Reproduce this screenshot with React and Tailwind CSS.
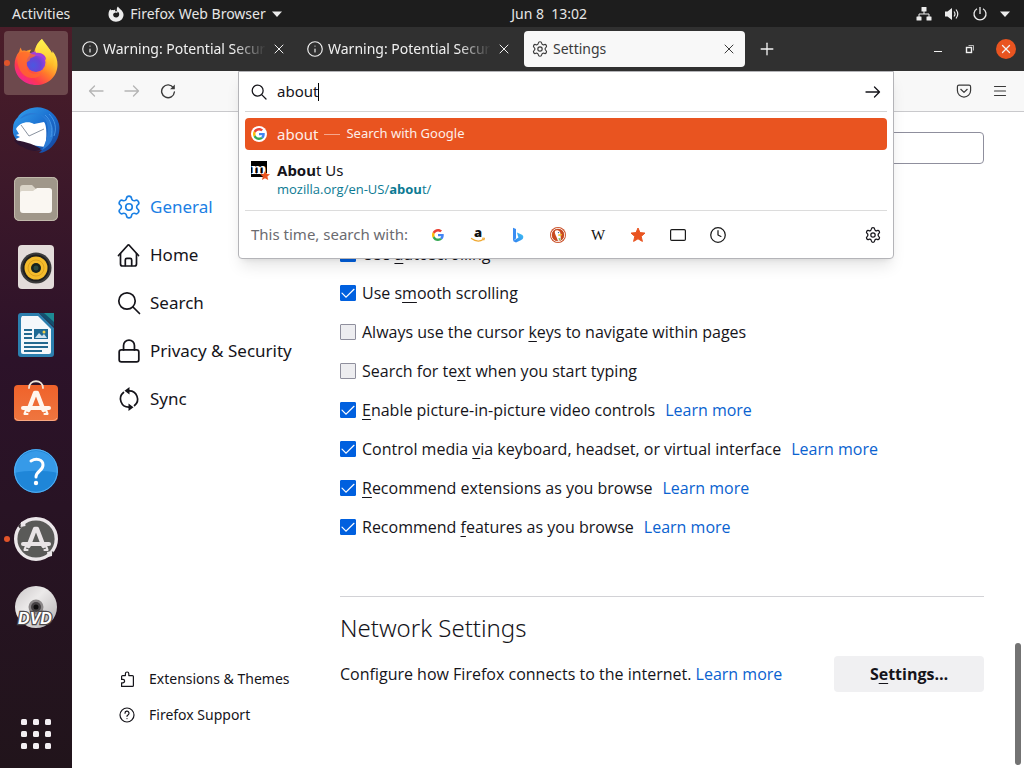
import React from "react";
import { Clock, Info, Lock, Plus, Settings, X } from "lucide-react";

/* ---------- Dock icons ---------- */

function FirefoxLogo() {
  return (
    <svg viewBox="0 0 48 48" className="size-12" aria-hidden="true">
      <defs>
        <linearGradient id="fx-body" x1="0.85" y1="0.1" x2="0.2" y2="0.95">
          <stop offset="0" stopColor="#fff14a" />
          <stop offset="0.3" stopColor="#ffc02f" />
          <stop offset="0.55" stopColor="#ff7a2b" />
          <stop offset="0.8" stopColor="#ff3750" />
          <stop offset="1" stopColor="#f0239a" />
        </linearGradient>
        <linearGradient id="fx-flame" x1="0.5" y1="0" x2="0.5" y2="1">
          <stop offset="0" stopColor="#fff44f" />
          <stop offset="0.5" stopColor="#ffd43a" />
          <stop offset="1" stopColor="#ff980e" stopOpacity="0" />
        </linearGradient>
        <radialGradient id="fx-globe" cx="0.35" cy="0.65" r="0.8">
          <stop offset="0" stopColor="#4a58e0" />
          <stop offset="0.5" stopColor="#6a43d6" />
          <stop offset="1" stopColor="#b23fe0" />
        </radialGradient>
      </defs>
      <path
        d="M30 0c.5 3.500 3 5.500 6 8.500 2 2 3.500 4 4 6 .4-.8.500-1.800.4-2.600 3.600 4.300 5.300 9.300 5.100 14.100C45.200 38 36 46 24.500 46 12.500 46 2.600 37.500 2.600 26c0-5 1.400-9.500 4.700-13.500.2-1.700.7-3 1.500-4.100.3 1.500.8 2.500 1.600 3.300 1.200-.3 2.600-.2 3.700.2C15.500 11.500 17.500 10.700 19.500 10.800c-1 .8-1.600 2-1.900 3.300h4.600C22.500 9.500 25.500 4 30 0z"
        fill="url(#fx-body)"
      />
      <circle cx="24" cy="23.500" r="9.500" fill="url(#fx-globe)" />
      <path d="M17 16c2-3.500 8-5 13-2 2.500 1.500 4 4 4 7-3-3.500-7-4.500-11-4z" fill="#a33fd8" />
      <path
        d="M24 14c5-1 10 2 11 7 1 6-2 11-7 13 8 .5 14-5 14-13C41 13 35 7 30 0c-5 4-7.500 9-6 14z"
        fill="url(#fx-flame)"
      />
      <path
        d="M5.500 16c4-4 9-4 12-2.500 1 1.500 3 2 6 2.200.2 1.300-1.500 2.300-4.500 3.300-1 .5-1.400 1.500-1.200 2.500-2 .8-3.500 2-3.400 4.500 0 5 4 9 9.600 9 3 0 4.500-.5 6-1.500-2 4-6 6-11 5.500C10 38 4 28 5.500 16z"
        fill="#ff6a2c"
        opacity="0.75"
      />
    </svg>
  );
}

function ThunderbirdLogo() {
  return (
    <svg viewBox="0 0 48 48" className="size-12" aria-hidden="true">
      <defs>
        <linearGradient id="tb-blue" x1="0" y1="0" x2="1" y2="1">
          <stop offset="0" stopColor="#35a3ee" />
          <stop offset="0.5" stopColor="#1b6fd0" />
          <stop offset="1" stopColor="#143f96" />
        </linearGradient>
      </defs>
      <path
        d="M20 1c11-3 24 4 27 16 2 10-3 22-13 27-2 1-5 2-7 2l3-3c-9 1-17-1-21-6C4 33 0 28 1 21c0-5 2-8 5-11 1-3 8-8 14-9z"
        fill="url(#tb-blue)"
      />
      <path
        d="M4 22c3-6 12-9 18-5l10-2c3 3 3 17 1 25l-14-2C12 37 5 35 4 32l4-2-4-2 3-1z"
        fill="#fff"
      />
      <path d="M9 18l8 11 15-7" fill="none" stroke="#8a93a0" strokeWidth="1" />
      <path
        d="M8 12C13 5 24 4 31 10c7 6 6 20-1 33 9-5 13-13 11-22C38 9 24 2 8 12z"
        fill="#2a7bd6"
      />
      <path d="M33 8c6 5 8 13 6 22M37 7c6 6 8 14 5 22" fill="none" stroke="#4595e6" strokeWidth="1" />
      <path d="M2 33c8 1 18 3 27 9-5 4-14 1-18-2-4-1-7-4-9-7z" fill="#2d1530" />
    </svg>
  );
}

function FilesLogo() {
  return (
    <svg viewBox="0 0 44 44" className="size-11" aria-hidden="true">
      <rect width="44" height="44" rx="5" fill="#a0978a" />
      <rect x="0.500" y="0.500" width="43" height="43" rx="5" fill="none" stroke="#c2baac" />
      <path d="M6 11a3 3 0 0 1 3-3h9l4 4h13a3 3 0 0 1 3 3v5H6z" fill="#d9d3c7" />
      <path d="M6 16a2 2 0 0 1 2-2h11l4-3h12a3 3 0 0 1 3 3v19a3 3 0 0 1-3 3H9a3 3 0 0 1-3-3z" fill="#faf7f2" />
    </svg>
  );
}

function MusicLogo() {
  return (
    <svg viewBox="0 0 36 44" className="h-11 w-9" aria-hidden="true">
      <rect width="36" height="44" rx="4" fill="#e3dcda" />
      <circle cx="18" cy="23" r="15.500" fill="#3b3b3b" />
      <circle cx="18" cy="23" r="13.500" fill="#1f1f1f" />
      <circle cx="18" cy="23" r="11.500" fill="#f3bb2c" />
      <circle cx="18" cy="23" r="8" fill="none" stroke="#dda21c" strokeWidth="1" />
      <circle cx="18" cy="23" r="5" fill="#16231f" />
      <circle cx="18" cy="23" r="2.500" fill="#2b4a3f" />
    </svg>
  );
}

function WriterLogo() {
  return (
    <svg viewBox="0 0 38 46" className="h-[46px] w-[38px]" aria-hidden="true">
      <path d="M4 1h18l15 15v26a3 3 0 0 1-3 3H4a3 3 0 0 1-3-3V4a3 3 0 0 1 3-3z" fill="#2b7fae" />
      <path d="M5 4h16l13 13v23a2 2 0 0 1-2 2H6a2 2 0 0 1-2-2V6z" fill="#f4f8fb" />
      <path d="M22 1h15v14z" fill="#14506f" />
      <path d="M27 1h10v9z" fill="#1d8a94" />
      <path
        d="M7 18h8M7 22h8M7 26h8M7 31h24M7 35h24M7 39h18"
        stroke="#23698f"
        strokeWidth="2"
      />
      <rect x="17" y="17" width="14" height="10" fill="#1e6a94" />
      <path d="M18 26l4-5 3 3 2-2 3 4z" fill="#cfe3ee" />
      <circle cx="27" cy="20" r="1.500" fill="#f2d34c" />
    </svg>
  );
}

function LetterA({ color }) {
  return (
    <g fill="none" stroke={color} strokeLinecap="round" strokeLinejoin="round">
      <path d="M15.500 30l6.500-17h2l6.500 17" strokeWidth="4.400" />
      <path d="M10 28h26" strokeWidth="4" />
      <path d="M13 30l-1.500 4h3M33 30l1.500 4h-3" strokeWidth="2.200" />
    </g>
  );
}

function SoftwareLogo() {
  return (
    <svg viewBox="0 0 46 46" className="size-[46px]" aria-hidden="true">
      <defs>
        <linearGradient id="sw-bag" x1="0" y1="0" x2="0" y2="1">
          <stop offset="0" stopColor="#f0622a" />
          <stop offset="1" stopColor="#ee7640" />
        </linearGradient>
      </defs>
      <rect x="1" y="5" width="44" height="36" rx="4" fill="url(#sw-bag)" />
      <path d="M2 38q1 2.500 4 2.500h34q3 0 4-2.500" fill="none" stroke="#f7a883" />
      <path d="M16 8c0-9 14-9 14 0" fill="none" stroke="#efe6da" strokeWidth="1.800" strokeLinecap="round" />
      <LetterA color="#fff6ee" />
    </svg>
  );
}

function HelpLogo() {
  return (
    <svg viewBox="0 0 44 44" className="size-11" aria-hidden="true">
      <circle cx="22" cy="22" r="22" fill="#1f86d8" />
      <path d="M0 24a22 22 0 0 1 44 0C32 21 12 21 0 24z" fill="#369ae8" />
      <circle cx="22" cy="22" r="21.300" fill="none" stroke="#56b0f2" />
      <path
        d="M17 12c5-3 12-2 12 4 0 6-7 6-7 12"
        fill="none"
        stroke="#fff"
        strokeWidth="3"
        strokeLinecap="round"
      />
      <circle cx="22" cy="34" r="2.200" fill="#fff" />
    </svg>
  );
}

function UpdaterLogo() {
  return (
    <svg viewBox="0 0 46 46" className="size-[46px]" aria-hidden="true">
      <circle cx="23" cy="23" r="21" fill="#5a5a58" />
      <circle cx="23" cy="23" r="20.300" fill="none" stroke="#ece7ea" strokeWidth="3.400" />
      <path d="M5 10l2.500-2.500 1.500 3-2 2zM38 35l3 1-2 3.500-2.500-1.500z" fill="#3c3538" />
      <path d="M8 6l4-1 .500 5-5 1zM39 40l-4 1-1-5 5-1z" fill="#ece7ea" />
      <LetterA color="#e9e4e6" />
    </svg>
  );
}

function DvdLogo() {
  return (
    <svg viewBox="0 0 44 44" className="size-11" aria-hidden="true">
      <defs>
        <linearGradient id="dvd-disc" x1="0" y1="0" x2="1" y2="1">
          <stop offset="0" stopColor="#c9c5c6" />
          <stop offset="0.4" stopColor="#eceaea" />
          <stop offset="1" stopColor="#b3afb0" />
        </linearGradient>
      </defs>
      <circle cx="22" cy="22" r="21" fill="url(#dvd-disc)" />
      <circle cx="22" cy="22" r="7.500" fill="#8b8788" />
      <circle cx="22" cy="22" r="5" fill="#454143" />
      <circle cx="22" cy="22" r="2.500" fill="#0f0d0e" />
      <text
        x="21"
        y="39"
        textAnchor="middle"
        fontFamily="Liberation Sans, sans-serif"
        fontWeight="700"
        fontStyle="italic"
        fontSize="16"
        fill="#fff"
        stroke="#4c484a"
        strokeWidth="2.500"
        paintOrder="stroke"
      >
        DVD
      </text>
    </svg>
  );
}

function AppsGrid() {
  return (
    <svg viewBox="0 0 30 30" className="size-[30px]" fill="#f3eef2" aria-hidden="true">
      {[0, 12, 24].map((y) =>
        [0, 12, 24].map((x) => <rect key={`${x}-${y}`} x={x} y={y} width="6" height="6" rx="1.500" />)
      )}
    </svg>
  );
}

const dockApps = [
  { name: "Firefox Web Browser", Logo: FirefoxLogo, active: true, running: true },
  { name: "Thunderbird Mail", Logo: ThunderbirdLogo },
  { name: "Files", Logo: FilesLogo },
  { name: "Rhythmbox", Logo: MusicLogo },
  { name: "LibreOffice Writer", Logo: WriterLogo },
  { name: "Ubuntu Software", Logo: SoftwareLogo },
  { name: "Help", Logo: HelpLogo },
  { name: "Software Updater", Logo: UpdaterLogo, running: true },
  { name: "DVD", Logo: DvdLogo },
];

function Dock() {
  return (
    <nav
      aria-label="Dock"
      className="flex w-[72px] shrink-0 flex-col items-center gap-1 bg-linear-to-b from-[#4b1d29] via-[#2c1229] via-45% to-[#21141b] pt-1 pb-0.5"
    >
      {dockApps.map(({ name, Logo, active, running }) => (
        <button
          key={name}
          type="button"
          aria-label={name}
          className={
            active
              ? "relative grid size-16 place-items-center rounded bg-[#6d494d]"
              : "relative grid size-16 place-items-center rounded"
          }
        >
          {running && <span className="absolute top-[29px] left-0 size-[6px] rounded-full bg-[#e2542a]" />}
          <Logo />
        </button>
      ))}
      <button type="button" aria-label="Show Applications" className="mt-auto grid size-16 place-items-center">
        <AppsGrid />
      </button>
    </nav>
  );
}

/* ---------- Shared line icons ---------- */

function SearchIcon({ className, strokeWidth }) {
  return (
    <svg viewBox="0 0 24 24" className={className} fill="none" stroke="currentColor" strokeWidth={strokeWidth} strokeLinecap="round" aria-hidden="true">
      <circle cx="10" cy="10" r="8.200" />
      <path d="M16 16l6.500 6.500" />
    </svg>
  );
}

function Arrow({ back }) {
  return (
    <svg viewBox="0 0 16 16" className="size-4" fill="none" stroke="currentColor" strokeWidth="1.300" strokeLinecap="round" strokeLinejoin="round" aria-hidden="true">
      {back ? <path d="M15 8H1.500M6.500 3l-5 5 5 5" /> : <path d="M1 8h13.500M9.500 3l5 5-5 5" />}
    </svg>
  );
}

/* ---------- System bar ---------- */

function SystemBar() {
  return (
    <header className="grid h-[27px] grid-cols-[1fr_auto_calc(50%-75px)] items-center bg-[#1d1d1d] text-sm text-[#e6e6e6]">
      <div className="flex items-center gap-[38px] pl-3">
        <button type="button">Activities</button>
        <button type="button" className="flex items-center gap-1.5">
          <svg viewBox="0 0 16 16" className="size-4" aria-hidden="true">
            <path
              d="M10 .5c.6 1.500 2 2 3.500 3.800C15.200 6.200 15.700 8 15.500 9.500 15 13.300 12 15.700 8 15.700S.6 12.700.5 8.500C.5 6 1.300 4 2.500 3l.5 1.500c.6-.5 1.700-.6 2.500-.3L7.300 3.500 7 5.200h2C8.500 3 8.800 1.500 10 .5zM7.500 6.500C5.500 7 5 8 5.200 9.200c.3 1.600 1.700 2.300 3 2.200 1.800-.1 3.100-1.500 3-3.200 0-1.200-.8-2.300-1.700-2.700L9.300 7z"
              fill="#ececec"
              fillRule="evenodd"
            />
          </svg>
          Firefox Web Browser
          <svg viewBox="0 0 10 6" className="h-1.5 w-2.5" aria-hidden="true">
            <path d="M0 0.500h10L5 6z" fill="#ececec" />
          </svg>
        </button>
      </div>
      <time className="whitespace-pre">Jun 8  13:02</time>
      <div className="flex items-center justify-end gap-3 pr-3.5 pl-2 text-[#ececec]">
        <svg viewBox="0 0 16 16" className="size-4" fill="currentColor" aria-hidden="true">
          <rect x="5.500" y="1" width="5" height="4.500" rx="0.500" />
          <rect x="0.500" y="10.500" width="5" height="4" rx="0.500" />
          <rect x="10.500" y="10.500" width="5" height="4" rx="0.500" />
          <path d="M8 5v3M3 11V8h10v3" fill="none" stroke="currentColor" />
        </svg>
        <svg viewBox="0 0 16 16" className="size-4" aria-hidden="true">
          <path d="M1 5.500h2.500L8 2v12l-4.500-3.500H1z" fill="currentColor" />
          <path d="M10 5.500q2 2.500 0 5M12 3.500q3.500 4.500 0 9" fill="none" stroke="currentColor" strokeWidth="1.200" />
        </svg>
        <svg viewBox="0 0 16 16" className="size-4" fill="none" stroke="currentColor" strokeWidth="1.300" aria-hidden="true">
          <path d="M5 2.700a6 6 0 1 0 6 0M8 1v7" />
        </svg>
        <svg viewBox="0 0 10 6" className="h-1.5 w-2.5" aria-hidden="true">
          <path d="M0 0.500h10L5 6z" fill="currentColor" />
        </svg>
      </div>
    </header>
  );
}

/* ---------- Tabs ---------- */

function Tab({ title, active }) {
  const Icon = active ? Settings : Info;
  return (
    <div
      className={
        active
          ? "flex h-9 w-[221px] items-center gap-[5px] rounded bg-[#f8f8f8] px-2 text-[#3b3b3b]"
          : "flex h-9 w-[221px] items-center gap-[5px] rounded px-2 text-[#f0f0f0]"
      }
    >
      <Icon className="size-4 shrink-0" viewBox="1 1 22 22" strokeWidth={1.6} aria-hidden="true" />
      <span
        className={
          active
            ? "min-w-0 flex-1 text-sm"
            : "min-w-0 flex-1 overflow-hidden mask-r-from-80% text-sm whitespace-nowrap"
        }
      >
        {title}
      </span>
      <button type="button" aria-label={`Close ${title}`}>
        <X className="size-4" strokeWidth={1.5} />
      </button>
    </div>
  );
}

function TabStrip() {
  return (
    <div className="flex h-11 items-center gap-1 bg-[#303030] pl-0.5 text-[#f2f2f2]">
      <Tab title="Warning: Potential Security Risk" />
      <Tab title="Warning: Potential Security Risk" />
      <Tab title="Settings" active />
      <button type="button" aria-label="Open a new tab" className="ml-2 grid size-5 place-items-center">
        <Plus className="size-5" strokeWidth={1.600} />
      </button>
      <div className="ml-auto flex items-center gap-5 pr-2">
        <button type="button" aria-label="Minimize">
          <svg viewBox="0 0 12 12" className="size-3" aria-hidden="true">
            <path d="M2 8.500h8" stroke="currentColor" />
          </svg>
        </button>
        <button type="button" aria-label="Restore">
          <svg viewBox="0 0 12 12" className="size-3" fill="none" stroke="currentColor" aria-hidden="true">
            <rect x="2.500" y="4.500" width="5" height="5" strokeWidth="1.400" />
            <path d="M4.500 2.500h5v5" strokeWidth="0.700" />
          </svg>
        </button>
        <button
          type="button"
          aria-label="Close window"
          className="grid size-5 place-items-center rounded-full bg-[#e95420]"
        >
          <X className="size-3.5" strokeWidth={2.200} />
        </button>
      </div>
    </div>
  );
}

/* ---------- Address bar ---------- */

function GoogleG({ className }) {
  return (
    <svg viewBox="0 0 48 48" className={className} aria-hidden="true">
      <path fill="#ea4335" d="M24 9.500c3.540 0 6.710 1.220 9.210 3.600l6.850-6.850C35.900 2.380 30.470 0 24 0 14.620 0 6.510 5.380 2.560 13.220l7.980 6.190C12.430 13.720 17.740 9.500 24 9.500z" />
      <path fill="#4285f4" d="M46.980 24.550c0-1.570-.15-3.090-.38-4.550H24v9.020h12.940c-.58 2.960-2.260 5.480-4.780 7.180l7.730 6c4.510-4.180 7.090-10.360 7.090-17.650z" />
      <path fill="#fbbc05" d="M10.530 28.590c-.48-1.450-.76-2.990-.76-4.590s.27-3.140.76-4.590l-7.980-6.190C.92 16.460 0 20.120 0 24c0 3.880.92 7.540 2.560 10.780l7.970-6.190z" />
      <path fill="#34a853" d="M24 48c6.480 0 11.930-2.130 15.890-5.810l-7.730-6c-2.150 1.450-4.920 2.300-8.160 2.300-6.260 0-11.570-4.220-13.470-9.910l-7.980 6.190C6.510 42.620 14.620 48 24 48z" />
    </svg>
  );
}

function AmazonLogo() {
  return (
    <svg viewBox="0 0 16 16" className="size-4 overflow-visible" aria-hidden="true">
      <text x="8" y="9.500" textAnchor="middle" fontFamily="Open Sans, sans-serif" fontWeight="800" fontSize="13" fill="#111">
        a
      </text>
      <path d="M1.500 11.500c4 3 8.500 3.200 12 .8" fill="none" stroke="#f0a830" strokeWidth="1.300" strokeLinecap="round" />
      <path d="M12 11.300l2.500-.3-.6 2.400" fill="none" stroke="#f0a830" />
    </svg>
  );
}

function BingLogo() {
  return (
    <svg viewBox="0 0 16 16" className="size-4" aria-hidden="true">
      <defs>
        <linearGradient id="bing-bowl" x1="0" y1="1" x2="1" y2="0">
          <stop offset="0" stopColor="#2f7df0" />
          <stop offset="1" stopColor="#3fc3f2" />
        </linearGradient>
      </defs>
      <path d="M3 .8l3 1.100v9.600L3 14z" fill="#3a8df2" />
      <path d="M7 5.500l5 2.300c1.300.7 1.600 2 1.100 3.300-.3 1-1 1.500-1.800 2L6 15.500 3 14l5.500-3.400L7.600 8z" fill="url(#bing-bowl)" />
    </svg>
  );
}

function DuckLogo() {
  return (
    <svg viewBox="0 0 16 16" className="size-4" aria-hidden="true">
      <circle cx="8" cy="8" r="8" fill="#c84a20" />
      <circle cx="8" cy="8" r="6.700" fill="none" stroke="#fff" strokeWidth="0.900" />
      <path d="M5 4c1-1.200 4-1 5 1 .7 1.300.4 3 .6 4.500L11 13l-3 1-1.500-4C5.500 8 4.300 5.500 5 4z" fill="#fff" />
      <path d="M8 7.500l4-.4-.5 1.500-3 .4z" fill="#f7c52c" />
      <circle cx="8.500" cy="5.600" r="0.700" fill="#2d4f8e" />
      <path d="M8.500 11l3 1-2.500 1z" fill="#4fae4a" />
    </svg>
  );
}

function WikiLogo() {
  return (
    <svg viewBox="0 0 16 16" className="size-4 overflow-visible" aria-hidden="true">
      <text x="8" y="13" textAnchor="middle" fontFamily="Liberation Serif, serif" fontSize="15" fill="#111">
        W
      </text>
    </svg>
  );
}

function Star({ className }) {
  return (
    <svg viewBox="0 0 16 16" className={className} aria-hidden="true">
      <path
        d="M8 1l2 4.600 5 .5-3.800 3.300 1.200 5L8 11.800l-4.400 2.600 1.200-5L1 6.100l5-.5z"
        fill="#e95420"
        stroke="#e95420"
        strokeLinejoin="round"
      />
    </svg>
  );
}

function TabsIcon() {
  return (
    <svg viewBox="0 0 16 16" className="size-4" fill="none" stroke="#1b1b1b" strokeWidth="1.200" aria-hidden="true">
      <rect x="0.600" y="2.600" width="14.800" height="10.800" rx="1.200" />
    </svg>
  );
}

const engines = [
  { name: "Google", icon: <GoogleG className="size-3" /> },
  { name: "Amazon", icon: <AmazonLogo /> },
  { name: "Bing", icon: <BingLogo /> },
  { name: "DuckDuckGo", icon: <DuckLogo /> },
  { name: "Wikipedia", icon: <WikiLogo /> },
  { name: "Bookmarks", icon: <Star className="size-4" /> },
  { name: "Tabs", icon: <TabsIcon /> },
  { name: "History", icon: <Clock className="size-4 text-[#1b1b1b]" viewBox="1 1 22 22" strokeWidth={1.700} /> },
];

function AddressPanel() {
  return (
    <div className="absolute inset-x-0 top-0 z-10 rounded-b border border-[#b4b4b8] bg-white px-1.5 text-[#15141a] shadow-lg">
      <div className="flex h-10 items-center border-b border-[#d4d4d4] px-1.5">
        <SearchIcon className="mr-2.5 size-4" strokeWidth="1.900" />
        <input
          aria-label="Search or enter address"
          defaultValue="about"
          className="field-sizing-content bg-transparent text-[15px] outline-none"
        />
        <span className="h-[18px] w-px bg-black" />
        <button type="button" aria-label="Go" className="ml-auto">
          <Arrow />
        </button>
      </div>

      <a
        href="#search"
        className="mt-1.5 flex h-8 items-center rounded bg-[#e95420] px-1.5 text-[#fdeee8]"
      >
        <span className="mr-2.5 grid size-4 place-items-center rounded-full bg-white">
          <GoogleG className="size-3" />
        </span>
        <span className="text-[15px]">about</span>
        <span className="mx-1.5 h-px w-4 bg-[#f5a78d]" />
        <span className="text-[13px]">Search with Google</span>
      </a>

      <a href="#about" className="flex h-[61px] items-start border-b border-[#dcdcdc] px-1.5 pt-2.5">
        <svg viewBox="0 0 20 20" className="mr-1.5 size-5" aria-hidden="true">
          <rect width="16" height="16" y="1" fill="#000" />
          <text x="8" y="14" textAnchor="middle" fontFamily="DejaVu Serif, serif" fontWeight="700" fontSize="15" fill="#fff">
            m
          </text>
          <path
            d="M14 11l1.500 3 3.500.3-2.600 2.300.8 3.400-3.200-1.800-3 1.800.8-3.400L9 14.300l3.500-.3z"
            fill="#e95420"
          />
        </svg>
        <span className="flex flex-col">
          <span className="text-[15px] leading-5">
            <b>Abou</b>t Us
          </span>
          <span className="font-['Open_Sans',sans-serif] text-[13px] leading-[18px] text-[#0b7a93]">
            mozilla.org/en-US/<b>abou</b>t/
          </span>
        </span>
      </a>

      <div className="flex h-[47px] items-center px-1.5">
        <span className="w-[177px] text-[15px] text-[#6b6b70]">This time, search with:</span>
        <div className="flex gap-5">
          {engines.map(({ name, icon }) => (
            <button key={name} type="button" aria-label={name} className="grid size-5 place-items-center">
              {icon}
            </button>
          ))}
        </div>
        <button type="button" aria-label="Search settings" className="ml-auto">
          <Settings className="size-4" viewBox="1 1 22 22" strokeWidth={1.700} />
        </button>
      </div>
    </div>
  );
}

function Toolbar() {
  return (
    <div className="flex h-[41px] border-b border-[#c9c9cc] bg-[#f8f8f8] text-[#3a3a3a]">
      <div className="flex w-[166px] shrink-0 items-center gap-5 pl-4">
        <button type="button" aria-label="Back" className="text-[#b5b5b5]">
          <Arrow back />
        </button>
        <button type="button" aria-label="Forward" className="text-[#b5b5b5]">
          <Arrow />
        </button>
        <button type="button" aria-label="Reload">
          <svg viewBox="0 0 16 16" className="size-4" fill="none" stroke="currentColor" strokeWidth="1.400" aria-hidden="true">
            <path d="M13.400 4.800A6.400 6.400 0 1 0 14.400 9" strokeLinecap="round" />
            <path d="M14.800 1.500v4.700h-4.700z" fill="currentColor" stroke="none" />
          </svg>
        </button>
      </div>
      <div className="relative min-w-0 flex-1">
        <AddressPanel />
      </div>
      <div className="flex w-[130px] shrink-0 items-center justify-end gap-5 pr-4">
        <button type="button" aria-label="Save to Pocket">
          <svg viewBox="0 0 16 16" className="size-4" fill="none" stroke="currentColor" strokeWidth="1.200" strokeLinecap="round" strokeLinejoin="round" aria-hidden="true">
            <path d="M3 2.100h10a1.600 1.600 0 0 1 1.600 1.600v3.800a6.600 6.600 0 0 1-13.200 0V3.700A1.600 1.600 0 0 1 3 2.100z" />
            <path d="M4.800 6.300L8 9.400l3.200-3.100" />
          </svg>
        </button>
        <button type="button" aria-label="Open application menu">
          <svg viewBox="0 0 16 16" className="size-4" fill="none" stroke="currentColor" strokeWidth="1.200" strokeLinecap="round" aria-hidden="true">
            <path d="M2.500 3.500h11M2.500 8h11M2.500 12.500h11" />
          </svg>
        </button>
      </div>
    </div>
  );
}

/* ---------- Settings page ---------- */

function HomeIcon() {
  return (
    <svg viewBox="0 0 24 24" className="size-6" fill="none" stroke="currentColor" strokeWidth="1.700" strokeLinecap="round" strokeLinejoin="round" aria-hidden="true">
      <path d="M1.500 12.500L10.800 2.200a1 1 0 0 1 1.400 0l9.300 10.300" />
      <path d="M3.500 10.500V21a2 2 0 0 0 2 2h12a2 2 0 0 0 2-2V10.500" />
      <path d="M8.300 22.500V17a1.600 1.600 0 0 1 1.600-1.600h3.200a1.600 1.600 0 0 1 1.600 1.600v5.500" />
    </svg>
  );
}

function SyncIcon() {
  return (
    <svg viewBox="0 0 24 24" className="size-6" fill="none" stroke="currentColor" strokeWidth="1.700" strokeLinecap="round" aria-hidden="true">
      <path d="M12 3.800A8.300 8.300 0 0 1 17.500 18.500M12 20.200A8.300 8.300 0 0 1 6.500 5.500" />
      <path d="M12.500 0v7.600L7.500 3.800zM11.500 16.400V24l5-3.800z" fill="currentColor" stroke="none" />
    </svg>
  );
}

const categories = [
  { name: "General", icon: <Settings className="size-6" viewBox="1 1 22 22" strokeWidth={1.500} />, active: true },
  { name: "Home", icon: <HomeIcon /> },
  { name: "Search", icon: <SearchIcon className="size-6" strokeWidth="1.700" /> },
  { name: "Privacy & Security", icon: <Lock className="size-6" viewBox="1 1 22 22" strokeWidth={1.600} /> },
  { name: "Sync", icon: <SyncIcon /> },
];

function Sidebar() {
  return (
    <aside className="flex w-[268px] shrink-0 flex-col justify-between pt-[71px] pr-4 pb-[35px] pl-[45px]">
      <nav aria-label="Categories" className="flex flex-col">
        {categories.map(({ name, icon, active }) => (
          <a
            key={name}
            href={`#${name}`}
            className={
              active
                ? "flex h-12 items-center gap-[9px] text-[17px] text-[#1b80e4]"
                : "flex h-12 items-center gap-[9px] text-[17px] text-[#15141a]"
            }
          >
            {icon}
            {name}
          </a>
        ))}
      </nav>
      <nav aria-label="More" className="flex flex-col text-sm text-[#15141a]">
        <a href="#extensions" className="flex h-9 items-center gap-3.5 pl-0.5">
          <svg viewBox="0 0 16 16" className="size-4" fill="none" stroke="currentColor" strokeWidth="1.200" strokeLinejoin="round" aria-hidden="true">
            <path d="M2.600 15.400V11.800h1.300a1.700 1.700 0 0 0 0-3.400H2.600V5.600a1 1 0 0 1 1-1h2.800V2.700a1.700 1.700 0 0 1 3.400 0v1.900h3.600a1 1 0 0 1 1 1v8.800a1 1 0 0 1-1 1z" />
          </svg>
          Extensions &amp; Themes
        </a>
        <a href="#support" className="flex h-9 items-center gap-3.5 pl-0.5">
          <svg viewBox="0 0 16 16" className="size-4" fill="none" stroke="currentColor" strokeWidth="1.200" strokeLinecap="round" aria-hidden="true">
            <circle cx="8" cy="8" r="7" />
            <path d="M6 6.200a2 2 0 1 1 3 1.700c-.7.4-1 .7-1 1.400" />
            <path d="M8 11.500v.1" />
          </svg>
          Firefox Support
        </a>
      </nav>
    </aside>
  );
}

/* Each label is split around its access key. */
const options = [
  { id: "autoscroll", parts: ["Use ", "a", "utoscrolling"], checked: true },
  { id: "smooth", parts: ["Use s", "m", "ooth scrolling"], checked: true },
  { id: "cursor", parts: ["Always use the cursor ", "k", "eys to navigate within pages"], checked: false },
  { id: "typing", parts: ["Search for te", "x", "t when you start typing"], checked: false },
  { id: "pip", parts: ["", "E", "nable picture-in-picture video controls"], checked: true, more: true },
  { id: "media", parts: ["Control media ", "v", "ia keyboard, headset, or virtual interface"], checked: true, more: true },
  { id: "ext", parts: ["", "R", "ecommend extensions as you browse"], checked: true, more: true },
  { id: "feat", parts: ["Recommend ", "f", "eatures as you browse"], checked: true, more: true },
];

function Option({ id, parts, checked, more }) {
  return (
    <div className="flex h-[39px] items-center whitespace-nowrap">
      <span className="grid size-4 shrink-0 place-items-center">
        <input
          id={id}
          type="checkbox"
          defaultChecked={checked}
          className="peer col-start-1 row-start-1 size-4 appearance-none rounded-[1px] border border-[#8f8f9d] bg-[#ededf0] checked:border-[#0060df] checked:bg-[#0060df]"
        />
        <svg
          viewBox="0 0 16 16"
          className="pointer-events-none col-start-1 row-start-1 hidden size-4 peer-checked:block"
          fill="none"
          stroke="#fff"
          strokeWidth="1.200"
          strokeLinecap="round"
          aria-hidden="true"
        >
          <path d="M2 8.200l4 4L14 4.300" />
        </svg>
      </span>
      <label htmlFor={id} className="pl-1.5">
        {parts[0]}
        <span className="underline underline-offset-3">{parts[1]}</span>
        {parts[2]}
      </label>
      {more && (
        <a href={`#${id}-help`} className="ml-2.5 text-[#0a62d0]">
          Learn more
        </a>
      )}
    </div>
  );
}

function SettingsPage() {
  return (
    <div className="flex flex-1 bg-white">
      <Sidebar />
      <main className="min-w-0 flex-1 pt-5 font-['Open_Sans',sans-serif] text-base text-[#15141a]">
        <input
          type="text"
          aria-label="Setting value"
          className="ml-auto block h-8 w-60 rounded border border-[#8f8f9d] bg-white px-2"
        />
        <div className="mt-[70px]">
          {options.map((option) => (
            <Option key={option.id} {...option} />
          ))}
        </div>
        <section className="mt-[50px] border-t border-[#d2d2d6] pt-[15px]">
          <h2 className="font-['Noto_Sans',sans-serif] text-2xl leading-8 font-light">Network Settings</h2>
          <div className="mt-3 flex items-center justify-between">
            <p>
              Configure how Firefox connects to the internet.{" "}
              <a href="#network" className="text-[#0a62d0]">
                Learn more
              </a>
            </p>
            <button type="button" className="h-9 w-[150px] rounded bg-[#f0f0f2] font-bold">
              S<span className="underline underline-offset-3">e</span>ttings…
            </button>
          </div>
        </section>
      </main>
      <div className="flex w-10 shrink-0 items-end justify-end pr-[3px] pb-[3px]">
        <div className="h-[122px] w-1.5 rounded-full bg-[#737373]" />
      </div>
    </div>
  );
}

export default function App() {
  return (
    <div className="flex min-h-screen flex-col font-['Noto_Sans',sans-serif]">
      <SystemBar />
      <div className="flex flex-1">
        <Dock />
        <div className="flex min-w-0 flex-1 flex-col">
          <TabStrip />
          <Toolbar />
          <SettingsPage />
        </div>
      </div>
    </div>
  );
}
